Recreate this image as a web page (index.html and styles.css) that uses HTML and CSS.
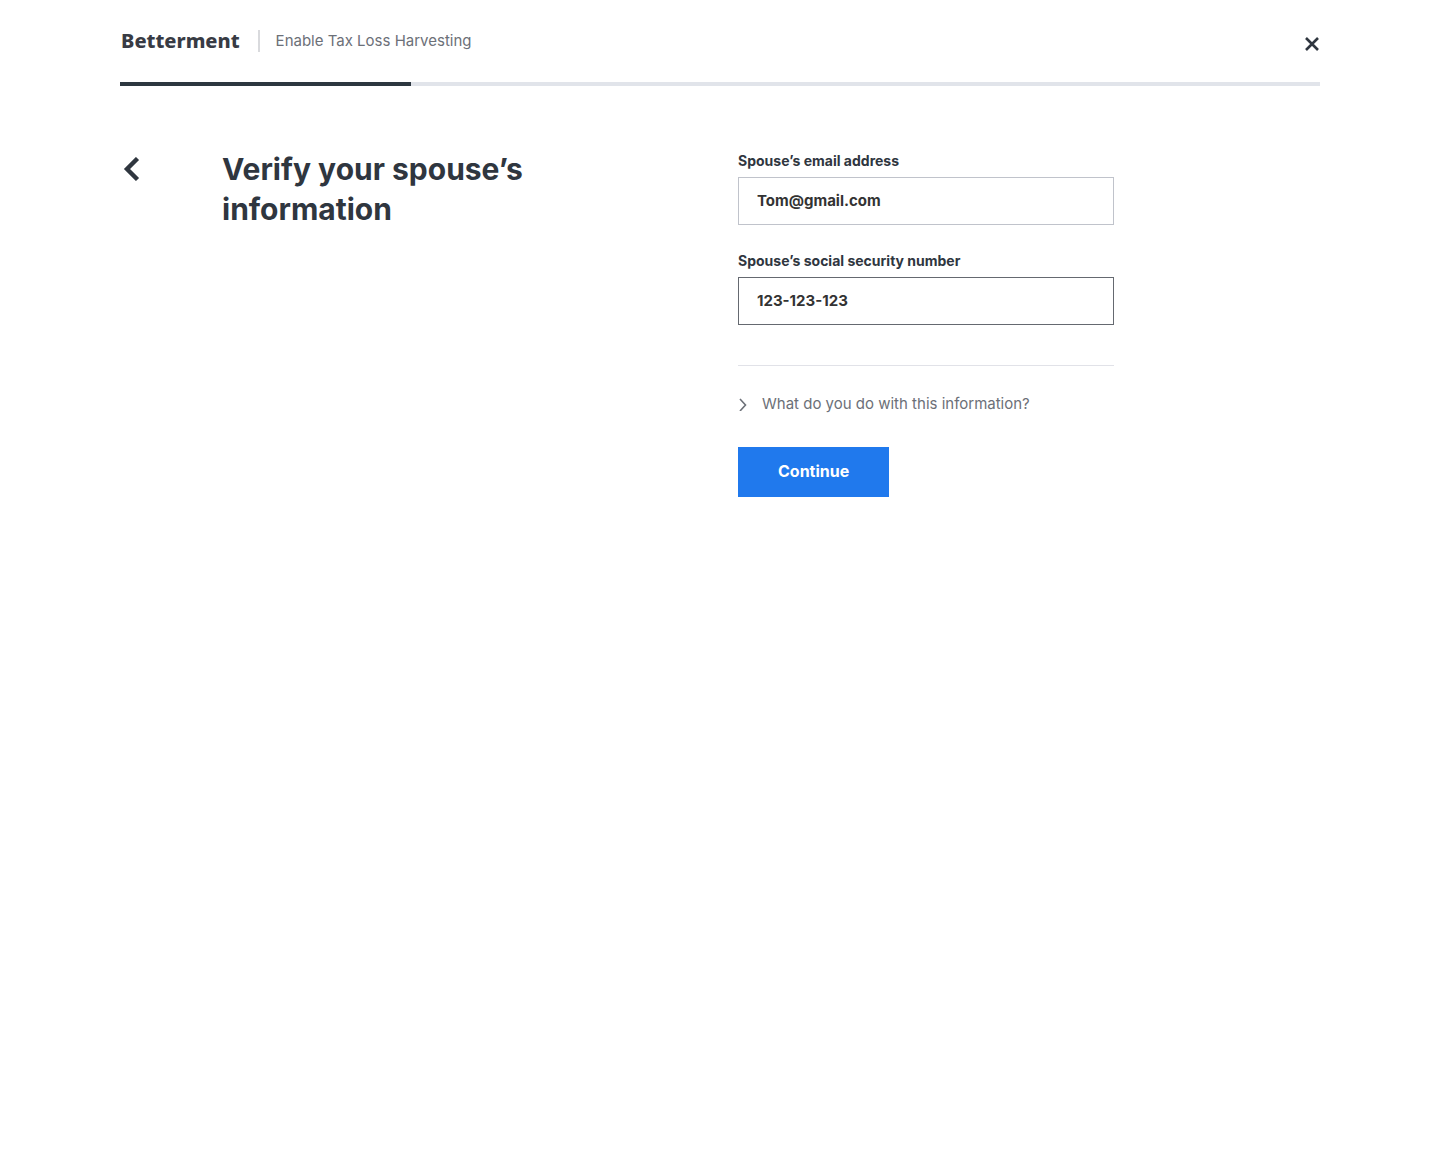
FILE: index.html
```html
<!DOCTYPE html>
<html lang="en">
<head>
  <meta charset="utf-8">
  <meta name="viewport" content="width=device-width, initial-scale=1">
  <title>Betterment – Enable Tax Loss Harvesting</title>
  <link rel="stylesheet" href="styles.css">
</head>
<body>
  <header class="header">
    <div class="header-row">
      <a class="brand" href="#">Betterment</a>
      <span class="flow-name">Enable Tax Loss Harvesting</span>
      <button class="icon-button close" type="button" aria-label="Close">
        <svg width="16" height="16" viewBox="0 0 16 16" fill="none" stroke="currentColor" stroke-width="2.6" aria-hidden="true"><path d="M2 2l12 12M14 2L2 14"/></svg>
      </button>
    </div>
    <progress class="progress" value="291" max="1200" aria-label="Setup progress"></progress>
  </header>
  <main class="content">
    <button class="icon-button back" type="button" aria-label="Back">
      <svg width="24" height="24" viewBox="0 0 24 24" fill="none" stroke="currentColor" stroke-width="4.4" aria-hidden="true"><path d="M17.500 1.500L7 12l10.500 10.500"/></svg>
    </button>
    <h1 class="title">Verify your spouse’s information</h1>
    <form class="form">
      <div class="field">
        <label class="label" for="email">Spouse’s email address</label>
        <input class="input" id="email" type="email" value="Tom@gmail.com">
      </div>
      <div class="field">
        <label class="label" for="ssn">Spouse’s social security number</label>
        <input class="input input-active" id="ssn" type="text" value="123-123-123">
      </div>
      <div class="help">
        <button class="help-toggle" type="button" aria-expanded="false">
          <svg width="10" height="14" viewBox="0 0 10 14" fill="none" stroke="currentColor" stroke-width="1.6" aria-hidden="true"><path d="M2 2l5.500 6L2 14"/></svg>
          What do you do with this information?
        </button>
      </div>
      <button class="submit" type="submit">Continue</button>
    </form>
  </main>
</body>
</html>
```
FILE: styles.css
```css
* {
  box-sizing: border-box;
}

body {
  margin: 0;
  padding: 0 120px;
  background: #fff;
  color: #2f363f;
  font-family: Inter, "Liberation Sans", sans-serif;
  font-size: 15px;
  line-height: 24px;
}

button,
input {
  font: inherit;
  color: inherit;
}

.header-row {
  display: flex;
  align-items: center;
  height: 82px;
}

.brand {
  padding: 0 18px 0 1px;
  border-right: 2px solid #d9dadd;
  color: #383b44;
  font-family: "Noto Sans", sans-serif;
  font-size: 20px;
  font-weight: 800;
  line-height: 22px;
  text-decoration: none;
}

.flow-name {
  padding-left: 16px;
  color: #6c7078;
}

.icon-button {
  display: flex;
  padding: 0;
  border: 0;
  background: none;
  cursor: pointer;
}

.close {
  margin-left: auto;
  padding-top: 6px;
}

.progress {
  display: block;
  width: 100%;
  height: 4px;
  border: 0;
  appearance: none;
  background: #e1e4ea;
}

.progress::-webkit-progress-bar {
  background: #e1e4ea;
}

.progress::-webkit-progress-value {
  background: #2d3740;
}

.content {
  display: grid;
  grid-template-columns: 102px minmax(0, 516px) minmax(0, 376px);
  align-items: start;
  padding: 63px 0;
}

.back {
  padding-top: 8px;
}

.title {
  max-width: 400px;
  margin: 0;
  font-size: 30px;
  font-weight: 700;
  line-height: 40px;
}

.field {
  margin-bottom: 24px;
}

.label {
  display: block;
  padding-bottom: 4px;
  font-size: 14px;
  font-weight: 700;
}

.input {
  display: block;
  width: 100%;
  height: 48px;
  padding: 0 18px 2px;
  border: 1px solid #c0c3cb;
  border-radius: 0;
  background: #fff;
  color: #333;
  font-weight: 700;
}

.input-active {
  border-color: #656970;
}

.help {
  margin-top: 40px;
  padding: 26px 0 31px;
  border-top: 1px solid #e1e2e8;
}

.help-toggle {
  display: flex;
  align-items: center;
  gap: 14px;
  padding: 0;
  border: 0;
  background: none;
  color: #6c7078;
  cursor: pointer;
}

.submit {
  height: 50px;
  padding: 0 40px 2px;
  border: 0;
  background: #2079ed;
  color: #fff;
  font-size: 16px;
  font-weight: 700;
  cursor: pointer;
}
```
